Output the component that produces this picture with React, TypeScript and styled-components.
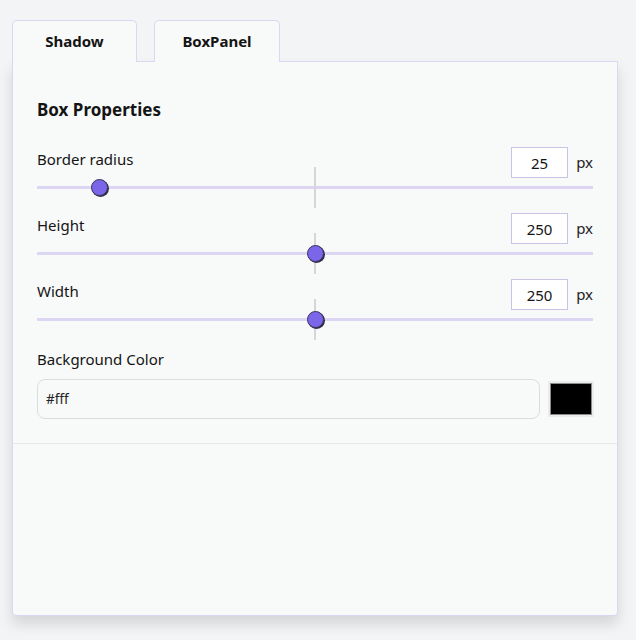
import React, { useState } from "react";
import styled, { createGlobalStyle } from "styled-components";

const Global = createGlobalStyle`
  html, body { margin: 0; padding: 0; background: #f3f4f6; }
  body { font-family: "Noto Sans", "Open Sans", sans-serif; color: #141414; }
  * { box-sizing: border-box; }
`;

const Page = styled.div`
  padding: 20px 18px 24px 12px;
  width: 636px;
`;

const TabBar = styled.div`
  display: flex;
  gap: 17px;
  position: relative;
  z-index: 1;
  margin-bottom: -1px;
`;

const Tab = styled.button<{ $w: number }>`
  width: ${(p) => p.$w}px;
  height: 42px;
  background: #f8f9f9;
  border: 1px solid #ddd6f2;
  border-bottom: none;
  border-radius: 5px 5px 0 0;
  font-family: inherit;
  font-weight: 700;
  font-size: 15px;
  color: #141414;
  padding: 0 0 2px;
  cursor: pointer;
`;

const Panel = styled.div`
  height: 555px;
  background: #f8f9f9;
  border: 1px solid #ddd6f2;
  border-radius: 0 0 4px 4px;
  box-shadow: 0 8px 14px rgba(0, 0, 0, 0.13);
  display: flex;
  flex-direction: column;
`;

const Section = styled.div`
  padding: 36px 24px 24px;
  border-bottom: 1.5px solid #e6e7ea;
  display: flex;
  flex-direction: column;
`;

const Heading = styled.h2`
  margin: 0 0 26px;
  font-size: 17px;
  line-height: 23px;
  font-weight: 700;
`;

const Field = styled.div`
  display: flex;
  flex-direction: column;
  margin-bottom: 17px;
`;

const HeaderRow = styled.div`
  display: flex;
  align-items: flex-start;
  height: 31px;
`;

const Label = styled.label`
  flex: 1;
  font-size: 15px;
  line-height: 22px;
  margin-top: 1px;
`;

const NumberBox = styled.input`
  width: 57px;
  height: 31px;
  border: 1px solid #cbc2e6;
  background: #fff;
  font-family: inherit;
  font-size: 15px;
  text-align: center;
  color: #141414;
  padding: 0;
  outline: none;
`;

const Unit = styled.span`
  width: 25px;
  text-align: right;
  font-size: 15px;
  line-height: 31px;
  color: #222;
`;

const SliderArea = styled.div`
  position: relative;
  height: 18px;
`;

const Track = styled.div`
  position: absolute;
  left: 0;
  right: 0;
  top: 8px;
  height: 2.5px;
  background: #ddd6f2;
`;

const Tick = styled.div`
  position: absolute;
  left: calc(50% - 1px);
  top: -11px;
  width: 2px;
  height: 41px;
  background: #d6d6d8;
`;

const Thumb = styled.div`
  position: absolute;
  top: 0.5px;
  width: 17px;
  height: 17px;
  margin-left: -8.5px;
  border-radius: 50%;
  background: #7b66ea;
  border: 1px solid #3a3358;
  box-shadow: 1px 1px 0 #2f2a44;
`;

const ColorLabel = styled.div`
  font-size: 15px;
  line-height: 22px;
  margin: 3px 0 9px;
`;

const ColorRow = styled.div`
  display: flex;
  align-items: center;
  gap: 10px;
  padding-right: 1px;
`;

const TextBox = styled.input`
  flex: 1;
  height: 40px;
  border: 1px solid #dcdcdc;
  border-radius: 8px;
  background: #f8f9f9;
  padding: 0 8px;
  font-family: inherit;
  font-size: 13.5px;
  color: #222;
  outline: none;
`;

const Swatch = styled.div<{ $c: string }>`
  width: 42px;
  height: 32px;
  background: ${(p) => p.$c};
  border: 1px solid #8a8a8a;
  box-shadow: 0 0 0 2px #ececec;
`;

function SliderField({ label, value, max }: { label: string; value: number; max: number }) {
  const thumbW = 17;
  const t = value / max;
  return (
    <Field>
      <HeaderRow>
        <Label>{label}</Label>
        <NumberBox defaultValue={value} />
        <Unit>px</Unit>
      </HeaderRow>
      <SliderArea>
        <Track />
        <Tick />
        <Thumb style={{ left: `calc(${thumbW / 2}px + (100% - ${thumbW}px) * ${t})` }} />
      </SliderArea>
    </Field>
  );
}

export default function App() {
  const [bg] = useState("#fff");
  return (
    <Page>
      <Global />
      <TabBar>
        <Tab $w={125}>Shadow</Tab>
        <Tab $w={126}>BoxPanel</Tab>
      </TabBar>
      <Panel>
        <Section>
          <Heading>Box Properties</Heading>
          <SliderField label="Border radius" value={25} max={250} />
          <SliderField label="Height" value={250} max={500} />
          <SliderField label="Width" value={250} max={500} />
          <ColorLabel>Background Color</ColorLabel>
          <ColorRow>
            <TextBox defaultValue={bg} />
            <Swatch $c="#000" />
          </ColorRow>
        </Section>
      </Panel>
    </Page>
  );
}
